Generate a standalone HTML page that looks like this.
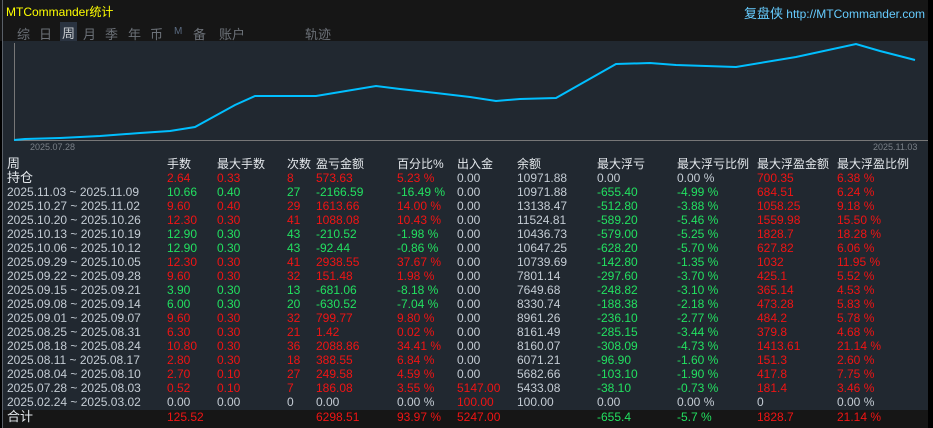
<!DOCTYPE html><html><head><meta charset="utf-8"><style>
*{margin:0;padding:0;box-sizing:border-box}
body{width:933px;height:428px;background:#000;position:relative;overflow:hidden;font-family:"Liberation Sans","Noto Sans CJK SC",sans-serif;font-size:12px;color:#c4ccd4}
.top{position:absolute;left:0;top:0;width:933px;height:41px;background:#161616}
.panel{position:absolute;left:3px;top:41px;width:925px;height:369px;background:#212830}
.tot{position:absolute;left:3px;top:410px;width:925px;height:18px;background:#161616}
.ttl{position:absolute;left:6px;top:3px;color:#ffff00;font-size:12px}
.site{position:absolute;right:8px;top:3px;color:#66ccff;font-size:12px}
.site b{font-weight:normal;font-size:13px}
.tabs span{position:absolute;top:24px;color:#6c7178;font-size:13px}
.r{position:absolute;left:0;width:933px;height:14px;line-height:14px;white-space:nowrap}
.r span{position:absolute}
.a{left:7px}.b{left:167px}.c{left:217px}.d{left:287px}.e{left:316px}.f{left:397px}.g{left:457px}.h{left:517px}.i{left:597px}.j{left:677px}.k{left:757px}.l{left:837px}
.R{color:#f01414}.G{color:#22e060}.W{color:#e4e8ec;font-size:12px}
.W .a{font-size:13px}
</style></head><body>
<div class="top"></div>
<div style="position:absolute;left:2px;top:0;width:1px;height:428px;background:#5a6068"></div>
<div class="ttl">MTCommander统计</div>
<div class="site"><b>复盘侠</b> http://MTCommander.com</div>
<div class="tabs"><span style="left:17px">综</span><span style="left:39px">日</span><span style="left:60px;top:22px;padding:1px 2px;background:#2a3340;color:#c8ccd0">周</span><span style="left:83px">月</span><span style="left:105px">季</span><span style="left:128px">年</span><span style="left:150px">币</span><span style="left:174px;font-size:10px;top:26px;color:#5a6a80">M</span><span style="left:193px">备</span><span style="left:219px">账户</span><span style="left:305px">轨迹</span></div>
<div class="panel"></div>
<svg style="position:absolute;left:0;top:0" width="933" height="160">
<line x1="14.5" y1="43" x2="14.5" y2="140" stroke="#777" />
<line x1="14" y1="140.5" x2="928" y2="140.5" stroke="#777"/>
<polyline fill="none" stroke="#00bfff" stroke-width="2" points="14,140 25,139 60,138 100,136 140,133 170,131 195,127 215,116 235,105 255,96 316,96 340,92 376,86 400,89 436,93 470,97 496,101 520,99 556,98 616,64 650,63 676,65 736,67 796,57 856,44 880,51 915,60"/>
<text x="30" y="150" fill="#7a8088" font-size="9" font-family="Liberation Sans">2025.07.28</text>
<text x="873" y="150" fill="#7a8088" font-size="9" font-family="Liberation Sans">2025.11.03</text>
<polygon points="932,36 928,40 932,44" fill="#888"/>
</svg>
<div class="r W" style="top:157px"><span class="a">周</span><span class="b">手数</span><span class="c">最大手数</span><span class="d">次数</span><span class="e">盈亏金额</span><span class="f">百分比%</span><span class="g">出入金</span><span class="h">余额</span><span class="i">最大浮亏</span><span class="j">最大浮亏比例</span><span class="k">最大浮盈金额</span><span class="l">最大浮盈比例</span></div>
<div class="r" style="top:171px"><span class="a W" style="font-size:13px">持仓</span><span class="b R">2.64</span><span class="c R">0.33</span><span class="d R">8</span><span class="e R">573.63</span><span class="f R">5.23 %</span><span class="g">0.00</span><span class="h">10971.88</span><span class="i">0.00</span><span class="j">0.00 %</span><span class="k R">700.35</span><span class="l R">6.38 %</span></div>
<div class="r" style="top:185px"><span class="a">2025.11.03 ~ 2025.11.09</span><span class="b G">10.66</span><span class="c G">0.40</span><span class="d G">27</span><span class="e G">-2166.59</span><span class="f G">-16.49 %</span><span class="g">0.00</span><span class="h">10971.88</span><span class="i G">-655.40</span><span class="j G">-4.99 %</span><span class="k R">684.51</span><span class="l R">6.24 %</span></div>
<div class="r" style="top:199px"><span class="a">2025.10.27 ~ 2025.11.02</span><span class="b R">9.60</span><span class="c R">0.40</span><span class="d R">29</span><span class="e R">1613.66</span><span class="f R">14.00 %</span><span class="g">0.00</span><span class="h">13138.47</span><span class="i G">-512.80</span><span class="j G">-3.88 %</span><span class="k R">1058.25</span><span class="l R">9.18 %</span></div>
<div class="r" style="top:213px"><span class="a">2025.10.20 ~ 2025.10.26</span><span class="b R">12.30</span><span class="c R">0.30</span><span class="d R">41</span><span class="e R">1088.08</span><span class="f R">10.43 %</span><span class="g">0.00</span><span class="h">11524.81</span><span class="i G">-589.20</span><span class="j G">-5.46 %</span><span class="k R">1559.98</span><span class="l R">15.50 %</span></div>
<div class="r" style="top:227px"><span class="a">2025.10.13 ~ 2025.10.19</span><span class="b G">12.90</span><span class="c G">0.30</span><span class="d G">43</span><span class="e G">-210.52</span><span class="f G">-1.98 %</span><span class="g">0.00</span><span class="h">10436.73</span><span class="i G">-579.00</span><span class="j G">-5.25 %</span><span class="k R">1828.7</span><span class="l R">18.28 %</span></div>
<div class="r" style="top:241px"><span class="a">2025.10.06 ~ 2025.10.12</span><span class="b G">12.90</span><span class="c G">0.30</span><span class="d G">43</span><span class="e G">-92.44</span><span class="f G">-0.86 %</span><span class="g">0.00</span><span class="h">10647.25</span><span class="i G">-628.20</span><span class="j G">-5.70 %</span><span class="k R">627.82</span><span class="l R">6.06 %</span></div>
<div class="r" style="top:255px"><span class="a">2025.09.29 ~ 2025.10.05</span><span class="b R">12.30</span><span class="c R">0.30</span><span class="d R">41</span><span class="e R">2938.55</span><span class="f R">37.67 %</span><span class="g">0.00</span><span class="h">10739.69</span><span class="i G">-142.80</span><span class="j G">-1.35 %</span><span class="k R">1032</span><span class="l R">11.95 %</span></div>
<div class="r" style="top:269px"><span class="a">2025.09.22 ~ 2025.09.28</span><span class="b R">9.60</span><span class="c R">0.30</span><span class="d R">32</span><span class="e R">151.48</span><span class="f R">1.98 %</span><span class="g">0.00</span><span class="h">7801.14</span><span class="i G">-297.60</span><span class="j G">-3.70 %</span><span class="k R">425.1</span><span class="l R">5.52 %</span></div>
<div class="r" style="top:283px"><span class="a">2025.09.15 ~ 2025.09.21</span><span class="b G">3.90</span><span class="c G">0.30</span><span class="d G">13</span><span class="e G">-681.06</span><span class="f G">-8.18 %</span><span class="g">0.00</span><span class="h">7649.68</span><span class="i G">-248.82</span><span class="j G">-3.10 %</span><span class="k R">365.14</span><span class="l R">4.53 %</span></div>
<div class="r" style="top:297px"><span class="a">2025.09.08 ~ 2025.09.14</span><span class="b G">6.00</span><span class="c G">0.30</span><span class="d G">20</span><span class="e G">-630.52</span><span class="f G">-7.04 %</span><span class="g">0.00</span><span class="h">8330.74</span><span class="i G">-188.38</span><span class="j G">-2.18 %</span><span class="k R">473.28</span><span class="l R">5.83 %</span></div>
<div class="r" style="top:311px"><span class="a">2025.09.01 ~ 2025.09.07</span><span class="b R">9.60</span><span class="c R">0.30</span><span class="d R">32</span><span class="e R">799.77</span><span class="f R">9.80 %</span><span class="g">0.00</span><span class="h">8961.26</span><span class="i G">-236.10</span><span class="j G">-2.77 %</span><span class="k R">484.2</span><span class="l R">5.78 %</span></div>
<div class="r" style="top:325px"><span class="a">2025.08.25 ~ 2025.08.31</span><span class="b R">6.30</span><span class="c R">0.30</span><span class="d R">21</span><span class="e R">1.42</span><span class="f R">0.02 %</span><span class="g">0.00</span><span class="h">8161.49</span><span class="i G">-285.15</span><span class="j G">-3.44 %</span><span class="k R">379.8</span><span class="l R">4.68 %</span></div>
<div class="r" style="top:339px"><span class="a">2025.08.18 ~ 2025.08.24</span><span class="b R">10.80</span><span class="c R">0.30</span><span class="d R">36</span><span class="e R">2088.86</span><span class="f R">34.41 %</span><span class="g">0.00</span><span class="h">8160.07</span><span class="i G">-308.09</span><span class="j G">-4.73 %</span><span class="k R">1413.61</span><span class="l R">21.14 %</span></div>
<div class="r" style="top:353px"><span class="a">2025.08.11 ~ 2025.08.17</span><span class="b R">2.80</span><span class="c R">0.30</span><span class="d R">18</span><span class="e R">388.55</span><span class="f R">6.84 %</span><span class="g">0.00</span><span class="h">6071.21</span><span class="i G">-96.90</span><span class="j G">-1.60 %</span><span class="k R">151.3</span><span class="l R">2.60 %</span></div>
<div class="r" style="top:367px"><span class="a">2025.08.04 ~ 2025.08.10</span><span class="b R">2.70</span><span class="c R">0.10</span><span class="d R">27</span><span class="e R">249.58</span><span class="f R">4.59 %</span><span class="g">0.00</span><span class="h">5682.66</span><span class="i G">-103.10</span><span class="j G">-1.90 %</span><span class="k R">417.8</span><span class="l R">7.75 %</span></div>
<div class="r" style="top:381px"><span class="a">2025.07.28 ~ 2025.08.03</span><span class="b R">0.52</span><span class="c R">0.10</span><span class="d R">7</span><span class="e R">186.08</span><span class="f R">3.55 %</span><span class="g R">5147.00</span><span class="h">5433.08</span><span class="i G">-38.10</span><span class="j G">-0.73 %</span><span class="k R">181.4</span><span class="l R">3.46 %</span></div>
<div class="r" style="top:395px"><span class="a">2025.02.24 ~ 2025.03.02</span><span class="b">0.00</span><span class="c">0.00</span><span class="d">0</span><span class="e">0.00</span><span class="f">0.00 %</span><span class="g R">100.00</span><span class="h">100.00</span><span class="i">0.00</span><span class="j">0.00 %</span><span class="k">0</span><span class="l">0.00 %</span></div>
<div class="tot"></div>
<div class="r" style="top:410px"><span class="a W" style="font-size:13px">合计</span><span class="b R">125.52</span><span class="e R">6298.51</span><span class="f R">93.97 %</span><span class="g R">5247.00</span><span class="i G">-655.4</span><span class="j G">-5.7 %</span><span class="k R">1828.7</span><span class="l R">21.14 %</span></div>
<div style="position:absolute;left:928px;top:0;width:5px;height:428px;background:#000"></div>
</body></html>
